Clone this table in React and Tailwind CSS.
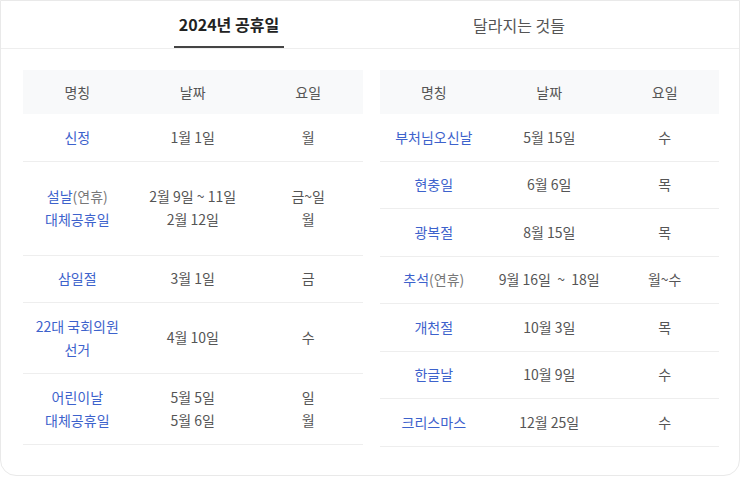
const left = [
  { name: [["신정"]], date: ["1월 1일"], day: ["월"] },
  { name: [["설날", "(연휴)"], ["대체공휴일"]], date: ["2월 9일 ~ 11일", "2월 12일"], day: ["금~일", "월"], tall: true },
  { name: [["삼일절"]], date: ["3월 1일"], day: ["금"] },
  { name: [["22대 국회의원"], ["선거"]], date: ["4월 10일"], day: ["수"] },
  { name: [["어린이날"], ["대체공휴일"]], date: ["5월 5일", "5월 6일"], day: ["일", "월"] },
];

const right = [
  { name: [["부처님오신날"]], date: ["5월 15일"], day: ["수"] },
  { name: [["현충일"]], date: ["6월 6일"], day: ["목"] },
  { name: [["광복절"]], date: ["8월 15일"], day: ["목"] },
  { name: [["추석", "(연휴)"]], date: ["9월 16일  ~  18일"], day: ["월~수"] },
  { name: [["개천절"]], date: ["10월 3일"], day: ["목"] },
  { name: [["한글날"]], date: ["10월 9일"], day: ["수"] },
  { name: [["크리스마스"]], date: ["12월 25일"], day: ["수"] },
];

const HolidayTable = ({ rows }) => (
  <div className="flex-1">
    <div className="grid grid-cols-[32%_36%_32%] bg-[#f8f9fa] h-[44px] items-center text-center text-[14px] text-[#555]">
      <span>명칭</span>
      <span>날짜</span>
      <span>요일</span>
    </div>
    {rows.map((r, i) => (
      <div
        key={i}
        className={
          "grid grid-cols-[32%_36%_32%] items-center text-center text-[14px] leading-[23.5px] border-b border-[#eeeeee] " +
          (r.tall ? "py-[23px]" : "py-[11.5px]")
        }
      >
        <div className="text-[#3d62cc]">
          {r.name.map((line, j) => (
            <div key={j}>
              {line[0]}
              {line[1] && <span className="text-[#777]">{line[1]}</span>}
            </div>
          ))}
        </div>
        <div className="text-[#555] whitespace-pre">
          {r.date.map((d, j) => (
            <div key={j}>{d}</div>
          ))}
        </div>
        <div className="text-[#555]">
          {r.day.map((d, j) => (
            <div key={j}>{d}</div>
          ))}
        </div>
      </div>
    ))}
  </div>
);

export default function App() {
  return (
    <div
      className="w-[743px] h-[482px] bg-white"
      style={{ fontFamily: '"Noto Sans CJK KR", "Noto Sans", sans-serif' }}
    >
      <div className="w-[740px] h-[476px] border border-[#e9e9e9] rounded-b-[16px] bg-white">
        <div className="flex justify-center h-[48px] border-b border-[#eeeeee] pl-[8px]">
          <div className="w-[290px] flex justify-center">
            <div className="px-[5px] h-full flex items-center border-b-2 border-[#444] text-[16px] font-bold text-[#222]">
              2024년 공휴일
            </div>
          </div>
          <div className="w-[290px] flex justify-center">
            <div className="px-[5px] h-full flex items-center text-[16px] text-[#555]">
              달라지는 것들
            </div>
          </div>
        </div>
        <div className="flex items-start gap-[17px] pl-[22px] pr-[20px] pt-[21px]">
          <HolidayTable rows={left} />
          <HolidayTable rows={right} />
        </div>
      </div>
    </div>
  );
}
